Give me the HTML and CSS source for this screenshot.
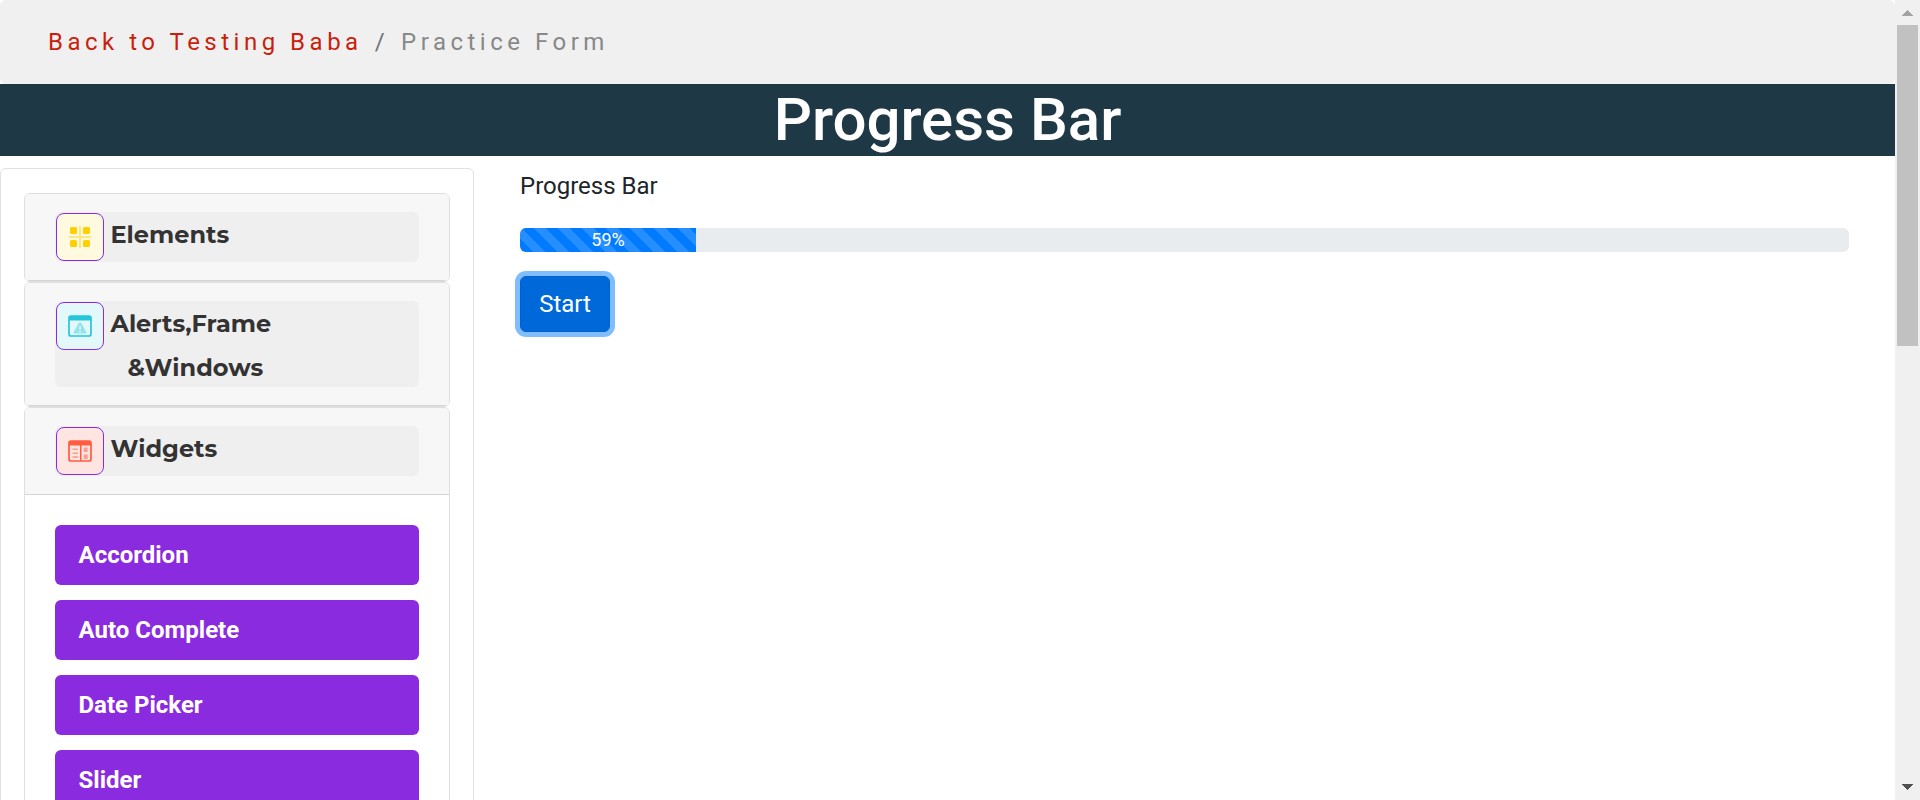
FILE: index.html
```html
<!DOCTYPE html>
<html lang="en">
<head>
<meta charset="utf-8">
<title>Progress Bar</title>
<link rel="stylesheet" href="styles.css">
</head>
<body>
<div class="window">
  <div class="page">
    <nav class="breadcrumb"><a class="back" href="#">Back to Testing Baba</a><span class="slash">/</span><span class="current">Practice Form</span></nav>
    <h1 class="title">Progress Bar</h1>
    <div class="columns">
      <aside class="sidebar">
        <section class="card">
          <div class="card-header"><button class="group">
            <span class="icon yellow"><svg width="24" height="24" viewBox="0 0 24 24"><path d="M11 1h2v22h-2zM1 11h22v2H1z" fill="#ffe680"/><g fill="#ffd000"><rect x="2" y="2" width="7" height="7" rx="1.5"/><rect x="15" y="2" width="7" height="7" rx="1.5"/><rect x="2" y="15" width="7" height="7" rx="1.5"/><rect x="15" y="15" width="7" height="7" rx="1.5"/></g></svg></span>
            <span class="label">Elements</span>
          </button></div>
        </section>
        <section class="card">
          <div class="card-header"><button class="group">
            <span class="icon cyan"><svg width="24" height="24" viewBox="0 0 24 24"><rect x="1" y="2" width="22" height="20" rx="2" fill="none" stroke="#26c6da" stroke-width="1.7"/><path d="M1 2h22v4.500H1z" fill="#26c6da"/><path d="M12 8.500q.8 0 1.300.8l5 8.700q.6 1.500-.8 1.500h-11q-1.400 0-.8-1.500l5-8.700q.5-.8 1.300-.8z" fill="#93e3ed"/><path d="M11.300 12h1.500v3.700h-1.500zM11.300 17h1.500v1.500h-1.500z" fill="#e3f8fb"/></svg></span>
            <span class="label alerts">Alerts,Frame<br><span class="second">&amp;Windows</span></span>
          </button></div>
        </section>
        <section class="card">
          <div class="card-header"><button class="group">
            <span class="icon red"><svg width="24" height="24" viewBox="0 0 24 24"><rect x="1" y="2" width="22" height="20" rx="2" fill="none" stroke="#ff5c40" stroke-width="1.700"/><path d="M1 2h22v4.500H1zM12 6h1.500v16H12z" fill="#ff5c40"/><path d="M4.500 9.500h5.500v1.600H4.500zM4.500 13.500h5.500v1.600H4.500zM4.500 17.300h5.500v1.600H4.500zM15.700 8.500h4v4.500h-4zM15.700 15.500h4v4.500h-4z" fill="#ff9c8c"/></svg></span>
            <span class="label">Widgets</span>
          </button></div>
          <ul class="items">
            <li>Accordion</li><li>Auto Complete</li><li>Date Picker</li><li>Slider</li>
          </ul>
        </section>
      </aside>
      <main class="content">
        <p class="caption">Progress Bar</p>
        <div class="progress"><div class="bar">59%</div></div>
        <button class="start">Start</button>
      </main>
    </div>
  </div>
  <div class="scrollbar">
    <svg class="arrow" width="25" height="25" viewBox="0 0 25 25" shape-rendering="crispEdges"><path d="M7 16 12.500 10 18 16z" fill="#a3a3a3"/></svg>
    <div class="thumb"></div>
    <svg class="arrow" width="25" height="25" viewBox="0 0 25 25" shape-rendering="crispEdges"><path d="M7 9 12.500 15 18 9z" fill="#505050"/></svg>
  </div>
</div>
</body>
</html>
```
FILE: styles.css
```css
* { box-sizing: border-box; }
body { margin: 0; font: 24px/36px Roboto, "Liberation Sans", sans-serif; color: #212529; background: #fff; overflow: hidden; }
button { font: inherit; border: 0; }
.window { display: flex; height: 800px; overflow: hidden; }
.page { width: 1895px; height: 800px; overflow: hidden; }
.breadcrumb { display: flex; height: 84px; padding: 24px 48px; border-radius: 6px; background: #f0f0f0; letter-spacing: 4.5px; white-space: pre; }
.back { color: #c91f0c; text-decoration: none; }
.slash { color: #6c757d; padding: 0 12px; }
.current { color: #888; }
.title { margin: 0; height: 72px; font-size: 60px; line-height: 72px; font-weight: 500; text-align: center; color: #fff; background: #1e3846; }
.columns { display: flex; align-items: flex-start; padding-top: 12px; }
.sidebar { width: 474px; height: 900px; padding: 24px 23px 0; border: 1px solid #dfe1e5; border-radius: 6px; }
.card { border: 1px solid #dedfdf; border-radius: 6px; overflow: hidden; background: #fff; }
.card-header { padding: 18px 30px; background: #f7f7f7; border-bottom: 1px solid #d4d4d4; }
.group { display: flex; align-items: flex-start; width: 364px; min-height: 50px; padding: 1px; border-radius: 6px; background: #efefef; text-align: left; }
.icon { display: flex; align-items: center; justify-content: center; width: 48px; height: 48px; border: 1px solid #8a2be2; border-radius: 8px; flex: none; }
.yellow { background: #fff9e0; }
.cyan { background: #e2f8fb; }
.red { background: #ffe5e1; }
.label { padding-left: 6.5px; font: 700 24px/44px Montserrat, Inter, sans-serif; color: #333; height: 44px; }
.alerts { height: 84px; }
.second { padding-left: 17px; }
.items { list-style: none; margin: 0; padding: 30px; display: grid; gap: 15px; }
.items li { height: 60px; padding: 12px 23.5px; border-radius: 6px; background: #8a2be0; color: #fff; font-weight: 700; }
.content { flex: 1; padding: 0 46px; }
.caption { margin: 0 0 24px; }
.progress { height: 24px; border-radius: 6px; overflow: hidden; background: #e9ecef; font-size: 18px; line-height: 24px; }
.bar { width: 176px; height: 24px; text-align: center; color: #fff; background: #007bff linear-gradient(45deg, rgba(255,255,255,.15) 25%, transparent 25%, transparent 50%, rgba(255,255,255,.15) 50%, rgba(255,255,255,.15) 75%, transparent 75%, transparent) 14px 0 / 24px 24px; }
.start { display: block; margin-top: 24px; width: 90px; height: 56px; padding: 0; border: 1px solid #0062cc; border-radius: 6px; background: #0069d9; color: #fff; box-shadow: 0 0 0 5px #80bdff; }
.scrollbar { width: 25px; height: 800px; display: flex; flex-direction: column; align-items: center; background: #f0f0f0; }
.thumb { width: 21px; height: 321px; margin-bottom: auto; background: #c1c1c1; }
.arrow { display: block; flex: none; }
```
